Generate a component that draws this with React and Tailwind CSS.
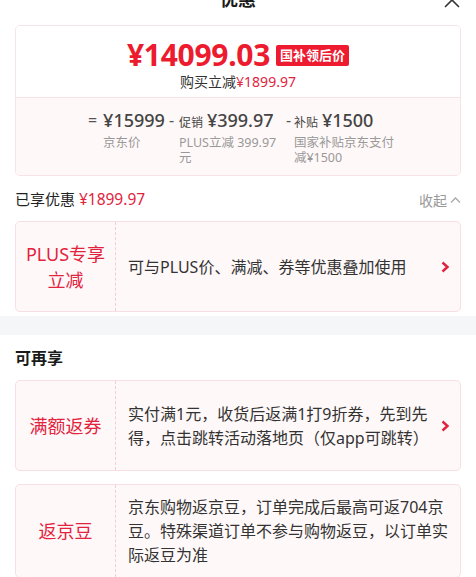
import React from "react";

const F = { fontFamily: '"Noto Sans", "Noto Sans CJK SC", sans-serif' };

function Chevron() {
  return (
    <svg width="10" height="12" viewBox="0 0 10 12" className="shrink-0">
      <path d="M2.5 1.5 L7.5 6 L2.5 10.5" fill="none" stroke="#e0223c" strokeWidth="2.4" strokeLinejoin="miter" />
    </svg>
  );
}

function Card({ label, children, arrow, h }) {
  return (
    <div className={`mx-[15px] flex rounded-[5px] border border-[#f7dfe3] bg-[#fff8f9] ${h}`}>
      <div className="flex w-[100px] shrink-0 items-center justify-center border-r border-dashed border-[#ecd0d5] px-2 text-center text-[18px] leading-[26px] text-[#e2233e]">
        {label}
      </div>
      <div className={`flex flex-1 items-center pl-[12px] ${arrow ? "pr-[10px]" : "pr-[8px]"}`}>
        <div className="flex-1 text-[16px] leading-[24px] text-[#333]">{children}</div>
        {arrow && <div className="ml-[6px]"><Chevron /></div>}
      </div>
    </div>
  );
}

export default function App() {
  return (
    <div className="w-[476px] h-[577px] overflow-hidden bg-white" style={F}>
      <div className="relative -mt-[13px] h-[24px] text-center text-[18px] font-bold leading-[24px] text-[#1a1a1a]">
        优惠
        <svg className="absolute right-[15px] top-[4px]" width="18" height="18" viewBox="0 0 18 18">
          <path d="M2 2 L16 16 M16 2 L2 16" stroke="#333" strokeWidth="1.6" fill="none" />
        </svg>
      </div>
      <div className="h-[14px]" />
      <div className="mx-[15px] overflow-hidden rounded-[5px] border border-[#f7e3e6]">
        <div className="flex flex-col items-center bg-white pt-[12px] pb-[5px]">
          <div className="flex items-center">
            <span className="text-[30px] font-bold leading-[34px] tracking-[-0.3px] text-[#ec1b2e]">¥14099.03</span>
            <span className="ml-[6px] rounded-[2px] bg-[#ee1a2f] px-[4px] text-[13px] font-bold leading-[21px] text-white">国补领后价</span>
          </div>
          <div className="text-[14px] leading-[20px] text-[#333]">
            购买立减<span className="text-[#e2233e]">¥1899.97</span>
          </div>
        </div>
        <div className="flex justify-center border-t border-[#f7e3e6] bg-[#fff8f8] pl-[6px] pt-[10px] pb-[10px]">
          <div className="flex">
            <span className="mt-[1px] w-[15px] text-[16px] leading-[22px] text-[#555]">=</span>
            <div>
              <div className="text-[18px] font-medium leading-[24px] text-[#444]">¥15999</div>
              <div className="mt-[3px] text-[12.5px] leading-[15px] text-[#999]">京东价</div>
            </div>
          </div>
          <div className="ml-[4px] flex">
            <span className="w-[10px] text-[16px] leading-[24px] text-[#555]">-</span>
            <div className="w-[100px]">
              <div className="flex items-baseline whitespace-nowrap text-[#444]">
                <span className="text-[12px]">促销</span>
                <span className="ml-[4px] text-[18px] font-medium leading-[24px]">¥399.97</span>
              </div>
              <div className="mt-[3px] text-[12.5px] leading-[15px] text-[#999]">PLUS立减 399.97 元</div>
            </div>
          </div>
          <div className="ml-[7px] flex">
            <span className="w-[8px] text-[16px] leading-[24px] text-[#555]">-</span>
            <div className="w-[100px]">
              <div className="flex items-baseline whitespace-nowrap text-[#444]">
                <span className="text-[12px]">补贴</span>
                <span className="ml-[4px] text-[18px] font-medium leading-[24px]">¥1500</span>
              </div>
              <div className="mt-[3px] text-[12.5px] leading-[15px] text-[#999]">国家补贴京东支付减¥1500</div>
            </div>
          </div>
        </div>
      </div>
      <div className="mx-[15px] mt-[13px] flex h-[22px] items-center justify-between">
        <div className="text-[15px] text-[#222]">
          已享优惠 <span className="text-[15.5px] text-[#e2233e]">¥1899.97</span>
        </div>
        <div className="flex items-center text-[14px] text-[#999]">
          收起
          <svg className="ml-[3px]" width="11" height="8" viewBox="0 0 11 8">
            <path d="M1 6.5 L5.5 2 L10 6.5" fill="none" stroke="#aaa" strokeWidth="1.3" />
          </svg>
        </div>
      </div>
      <div className="h-[10px]" />
      <Card label={<>PLUS专享<br />立减</>} arrow h="h-[91px]">
        可与PLUS价、满减、券等优惠叠加使用
      </Card>
      <div className="mt-[4px] h-[19px] bg-[#f5f6f8]" />
      <div className="mx-[15px] mt-[11px] text-[16px] font-bold leading-[24px] text-[#1a1a1a]">可再享</div>
      <div className="h-[10px]" />
      <Card label="满额返券" arrow h="h-[91px]">
        实付满1元，收货后返满1打9折券，先到先得，点击跳转活动落地页（仅app可跳转）
      </Card>
      <div className="h-[13px]" />
      <Card label="返京豆" h="h-[94px]">
        京东购物返京豆，订单完成后最高可返704京豆。特殊渠道订单不参与购物返豆，以订单实际返豆为准
      </Card>
    </div>
  );
}
